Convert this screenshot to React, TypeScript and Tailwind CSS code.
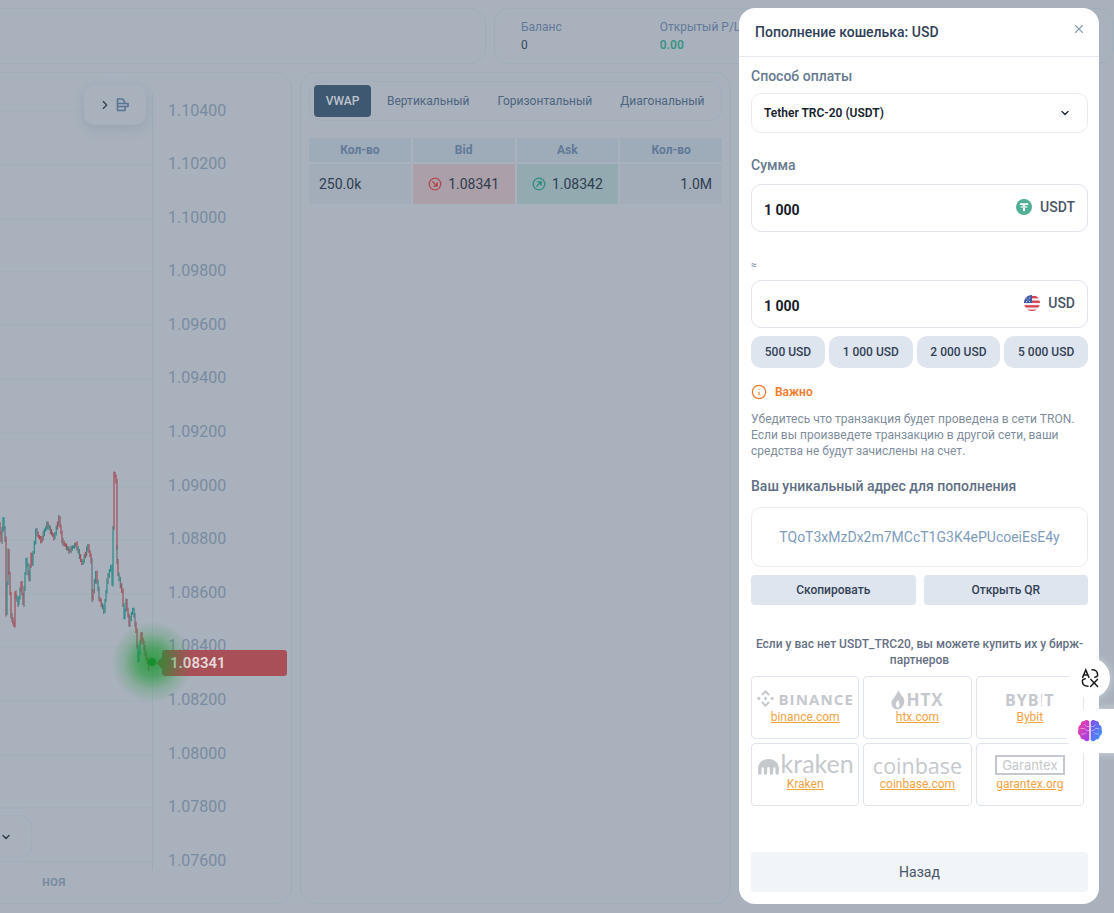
import React from 'react';
import { ChevronDown, ChevronRight, Info, X } from 'lucide-react';

const prices = ['1.10400', '1.10200', '1.10000', '1.09800', '1.09600', '1.09400', '1.09200', '1.09000', '1.08800', '1.08600', '1.08400', '1.08200', '1.08000', '1.07800', '1.07600'];
const gridLines = [110, 164, 218, 271, 324, 378, 432, 486, 539, 593, 646, 700, 754, 807, 861];
const amounts = ['500 USD', '1 000 USD', '2 000 USD', '5 000 USD'];

// price line, read off the reference (x, y in page pixels)
const pricePath: [number, number][] = [
    [-4, 520], [0, 523], [2, 540], [4, 518], [6, 538], [7, 613], [9, 550], [12, 615], [15, 625], [16, 592], [19, 603], [22, 582], [24, 603], [27, 558], [30, 578], [32, 553], [33, 563], [37, 530], [42, 540], [48, 523], [55, 537], [60, 517], [63, 540], [70, 550], [77, 543], [83, 563], [89, 545], [92, 560], [93, 598], [97, 572], [100, 597], [105, 610], [108, 580], [112, 565], [113, 583], [115, 472], [117, 480], [117, 547], [119, 573], [123, 590], [125, 617], [127, 600], [130, 623], [134, 608], [137, 630], [139, 660], [142, 633], [145, 647], [150, 667],
];

const candles = (() => {
    const out: { x: number; y1: number; y2: number; c: string }[] = [];
    for (let i = 0; i < pricePath.length - 1; i++) {
        const [x1, y1] = pricePath[i];
        const [x2, y2] = pricePath[i + 1];
        const n = Math.max(1, Math.round((x2 - x1) / 1.2));
        for (let k = 0; k < n; k++) {
            const a = y1 + ((y2 - y1) * k) / n;
            const b = y1 + ((y2 - y1) * (k + 1)) / n;
            const seed = (i * 7 + k * 13) % 5;
            const colour = seed === 4 ? '#64747c' : y2 > y1 ? (seed === 1 ? '#2b8a88' : '#a34f5a') : (seed === 1 ? '#a34f5a' : '#2b8a88');
            out.push({ x: x1 + ((x2 - x1) * k) / n, y1: Math.min(a, b) - 1 - seed * 0.5, y2: Math.max(a, b) + 1 + seed * 0.5, c: colour });
        }
    }
    return out;
})();

const ChartSvg = () => (
    <svg viewBox="-16 92 169 777" className="w-[169px] h-[777px] block">
        {gridLines.map((y) => (
            <line key={y} x1="-16" x2="153" y1={y} y2={y} stroke="#a3adb9" strokeWidth="1" />
        ))}
        {candles.map((c, i) => (
            <line key={i} x1={c.x} x2={c.x} y1={c.y1} y2={c.y2} stroke={c.c} strokeWidth="1.2" />
        ))}
    </svg>
);

const RoundArrow = ({ colour, up }: { colour: string; up?: boolean }) => (
    <svg viewBox="0 0 14 14" className="w-[14px] h-[14px] shrink-0" fill="none" stroke={colour} strokeWidth="1.3">
        <circle cx="7" cy="7" r="5.8" />
        {up ? (
            <path d="M4.800 9.200 9 5M5.800 4.800h3.400v3.400" strokeLinecap="round" strokeLinejoin="round" fill={colour} />
        ) : (
            <path d="M4.800 4.800 9 9M9.200 5.800v3.400H5.800" strokeLinecap="round" strokeLinejoin="round" fill={colour} />
        )}
    </svg>
);

const TetherIcon = () => (
    <svg viewBox="0 0 16 16" className="w-4 h-4 shrink-0">
        <circle cx="8" cy="8" r="8" fill="#50af95" />
        <path d="M3.800 4.200h8.400v1.900H9v1c1.500.1 2.800.4 2.800.8s-1.300.7-2.800.8v3.300H7V8.700c-1.500-.1-2.800-.4-2.800-.8s1.300-.7 2.800-.8v-1H3.800z" fill="#fff" />
        <path d="M4.600 7.700c1 .4 5.800.4 6.800 0" stroke="#50af95" strokeWidth=".5" fill="none" />
    </svg>
);

const FlagIcon = () => (
    <svg viewBox="0 0 16 16" className="w-4 h-4 shrink-0">
        <clipPath id="flag-clip"><circle cx="8" cy="8" r="8" /></clipPath>
        <g clipPath="url(#flag-clip)">
            <rect width="16" height="16" fill="#f0f0f0" />
            <rect y="1" width="16" height="2.300" fill="#d8404f" />
            <rect y="5.600" width="16" height="2.300" fill="#d8404f" />
            <rect y="10.200" width="16" height="2.300" fill="#d8404f" />
            <rect y="14.600" width="16" height="2" fill="#d8404f" />
            <rect width="8" height="8" fill="#3f5aa8" />
            <path d="M2 3h1M5 3h1M3.500 5h1M2 6.500h1M5 6.500h1" stroke="#fff" strokeWidth=".8" />
        </g>
    </svg>
);

const TranslateIcon = () => (
    <svg viewBox="0 0 20 20" className="w-5 h-5" fill="none" stroke="#1a1a1a" strokeWidth="1.5" strokeLinecap="round">
        <path d="M2.600 9.400 5.800 2l3.100 7.400M3.800 7h4" />
        <path d="M12 1.800c3.400 0 5.800 1.500 5.600 5.200M14.800 9.200c1.500-.2 2.400-.7 2.800-1.600" />
        <path d="M8 18.200c-3.400 0-5.800-1.500-5.600-5.200M5.200 10.800c-1.500.2-2.400.7-2.800 1.600" />
        <path d="M10.800 11.400 17.600 18.400M17.400 11.400 10.600 18.400" />
    </svg>
);

const BrainIcon = () => (
    <svg viewBox="0 0 26 24" className="w-[26px] h-6">
        <defs>
            <linearGradient id="brain-left" x1="0" y1="0" x2="1" y2="1">
                <stop offset="0" stopColor="#f8409a" />
                <stop offset="1" stopColor="#9a3ff0" />
            </linearGradient>
            <linearGradient id="brain-right" x1="0" y1="0" x2="1" y2="1">
                <stop offset="0" stopColor="#8a4bf0" />
                <stop offset="1" stopColor="#2f9cf8" />
            </linearGradient>
        </defs>
        <path d="M12.300 2.600C11.400.8 8.600.4 7.300 2 5 1.800 3.400 3.600 3.900 5.600 1.800 6.600.7 8.800 1.500 11 .3 13 1 15.800 3.200 16.800c-.1 2.400 1.800 4 3.900 3.700 1.200 2.200 4.100 2.200 5.200.6z" fill="url(#brain-left)" />
        <path d="M13.700 2.600c.9-1.800 3.700-2.200 5-.6 2.300-.2 3.900 1.600 3.400 3.600 2.100 1 3.200 3.200 2.400 5.400 1.200 2 .5 4.800-1.700 5.800.1 2.400-1.800 4-3.900 3.700-1.200 2.200-4.100 2.200-5.200.6z" fill="url(#brain-right)" />
        <path d="M3.500 9.500h4l2 2h2.500M4 15h3.500l1.500-1.500M7.500 5.500l2 2h2.500M22.500 9.500h-4l-2 2H14M22 15h-3.500L17 13.500M18.500 5.500l-2 2H14" fill="none" stroke="#fff" strokeWidth=".7" opacity=".6" />
    </svg>
);

const Field = ({ right }: { right: React.ReactNode }) => (
    <div className="h-12 rounded-[10px] border border-[#e0e5ec] pl-3 pr-3 flex justify-between">
        <span className="text-sm font-bold text-[#17202c] mt-4 leading-[18px]">1 000</span>
        <span className="flex items-center gap-2 h-[44px] text-sm font-medium text-[#4a5568]">{right}</span>
    </div>
);

const Exchange = ({ logo, label }: { logo: React.ReactNode; label: string }) => (
    <div className="h-[63px] rounded border border-[#dfe4ec] flex flex-col items-center pt-2">
        <div className="h-[25px] w-full flex items-center justify-center text-[#c5c8cc] whitespace-nowrap">{logo}</div>
        <a className="text-xs leading-[14px] underline text-[#f2a23f]">{label}</a>
    </div>
);

const App = () => {
    return (
        <div className="h-screen w-full relative overflow-hidden bg-[#a8b1bc] text-[#2f3d50] font-['Roboto',sans-serif]">
            <div className="-ml-6 flex flex-col gap-2 pt-2">
                {/* Top cards */}
                <div className="flex gap-2 h-14">
                    <div className="w-[510px] rounded-2xl border border-[#9fadbb]" />
                    <div className="w-[620px] rounded-2xl border border-[#9fadbb] pl-[26px] pt-[9px] flex gap-[98px] text-xs leading-[18px]">
                        <div>
                            <div className="text-[#64799a]">Баланс</div>
                            <div className="text-[#3a4a5e]">0</div>
                        </div>
                        <div>
                            <div className="text-[#64799a] whitespace-nowrap">Открытый P/L</div>
                            <div className="font-semibold text-[#3a9485]">0.00</div>
                        </div>
                    </div>
                </div>

                <div className="flex gap-2 h-[832px]">
                    {/* Chart */}
                    <div className="w-[316px] relative rounded-2xl border border-[#9fadbb]">
                        <div className="flex pt-5">
                            <div className="w-[177px] h-[777px] border-r border-[#9dabb9] pl-2 -ml-px overflow-hidden">
                                <ChartSvg />
                            </div>
                            <div className="h-[778px] pt-[7.5px] pl-[15px] flex flex-col justify-between text-base leading-5 text-[#7a8ba1]">
                                {prices.map((p) => (
                                    <div key={p}>{p}</div>
                                ))}
                            </div>
                        </div>
                        <div className="pl-[65px] text-sm font-medium text-[#7a8ba1]">ноя</div>

                        <div className="absolute left-[107px] top-[12px] w-[62px] h-10 rounded-[10px] border border-[#a3b0bd] bg-[#a8b1bc] shadow-[0_4px_12px_rgba(90,105,125,0.18)] flex items-center justify-center gap-1">
                            <ChevronRight size={14} className="text-[#2f3d50] -ml-[3px]" />
                            <svg viewBox="0 0 14 14" className="w-[14px] h-[14px]" fill="none" stroke="#587593" strokeWidth="1.6">
                                <path d="M1.500 1h5l2 2.500v2H1.500zM1.500 5.500h10.500v3H1.500zM1.500 8.500h7.500v4H1.500z" strokeLinejoin="round" />
                            </svg>
                        </div>

                        <div className="absolute left-0 top-[742px] w-[55px] h-[43px] rounded-xl border border-[#a1aebc] flex items-center pl-[22px]">
                            <ChevronDown size={12} strokeWidth={3} className="text-[#2f3d50]" />
                        </div>

                        <div className="absolute left-[185px] top-[577px] w-[125px] h-[26px] rounded-[3px] bg-[#a94f57] pl-2 flex items-center text-[15px] font-semibold text-[#e4d9da]">
                            1.08341
                            <div className="absolute -left-1 top-[9px] w-2 h-2 rotate-45 bg-[#a94f57]" />
                        </div>
                        <div className="absolute left-[135px] top-[549px] w-[80px] h-[80px] rounded-full bg-[radial-gradient(circle,rgba(24,150,45,0.8)_0%,rgba(24,150,45,0.6)_25%,rgba(24,150,45,0.2)_50%,rgba(24,150,45,0)_72%)]" />
                        <div className="absolute left-[171px] top-[585px] w-2 h-2 rounded-full bg-[#15902d]" />
                    </div>

                    {/* Quotes */}
                    <div className="w-[431px] rounded-2xl border border-[#9fadbb] p-2">
                        <div className="h-10 rounded-xl border border-[#a0aebc] flex items-center pl-1 text-xs text-[#4f6580]">
                            <div className="w-[57px] h-8 shrink-0 rounded bg-[#3f5872] text-[#bcc4cd] font-medium text-xs flex items-center justify-center">VWAP</div>
                            <div className="ml-4">Вертикальный</div>
                            <div className="ml-7">Горизонтальный</div>
                            <div className="ml-7">Диагональный</div>
                        </div>
                        <div className="mt-[17px] grid grid-cols-4 gap-0.5 w-[413px]">
                            {['Кол-во', 'Bid', 'Ask', 'Кол-во'].map((h, i) => (
                                <div key={i} className="h-6 bg-[#9eabb9] flex items-center justify-center text-xs font-bold text-[#617a98]">{h}</div>
                            ))}
                            <div className="h-10 bg-[#a2adb9] flex items-center pl-2.5 text-sm">250.0k</div>
                            <div className="h-10 bg-[#ab9fa9] flex items-center justify-center gap-1.5 text-sm"><RoundArrow colour="#b5474f" />1.08341</div>
                            <div className="h-10 bg-[#93aab0] flex items-center justify-center gap-1.5 text-sm"><RoundArrow colour="#2f8d82" up />1.08342</div>
                            <div className="h-10 bg-[#a2adb9] flex items-center justify-end pr-2.5 text-sm">1.0M</div>
                        </div>
                    </div>
                </div>
            </div>

            {/* Deposit drawer */}
            <div className="absolute left-[739px] top-2 w-[360px] h-[896px] rounded-2xl bg-white flex flex-col">
                <div className="h-[49px] shrink-0 border-b border-[#e6eaf0] pl-4 pr-[13px] flex items-center justify-between">
                    <span className="text-sm font-medium text-[#2f4058]">Пополнение кошелька: USD</span>
                    <X size={14} className="text-[#8aa0b8] -mt-1.5" />
                </div>
                <div className="pl-3 pr-[11px] flex-1 flex flex-col">
                    <div className="mt-[9px] text-sm leading-5 font-medium text-[#667a91]">Способ оплаты</div>
                    <div className="mt-[7px] h-10 rounded-[10px] border border-[#e8ecf1] pl-3 pr-4 flex items-center justify-between text-xs font-semibold text-[#17202c]">
                        Tether TRC-20 (USDT)
                        <ChevronDown size={12} strokeWidth={2.5} />
                    </div>
                    <div className="mt-[22px] text-sm leading-5 font-medium text-[#667a91]">Сумма</div>
                    <div className="mt-[9px]">
                        <Field right={<><TetherIcon />USDT</>} />
                    </div>
                    <div className="mt-[26px] h-[22px] text-[10px] leading-[14px] text-[#667a91]">≈</div>
                    <Field right={<><FlagIcon />USD</>} />
                    <div className="mt-2 flex gap-1">
                        {amounts.map((a) => (
                            <div key={a} className="flex-auto h-8 rounded-[10px] bg-[#dfe5ef] flex items-center justify-center px-[13px] text-xs font-medium text-[#334155] whitespace-nowrap">{a}</div>
                        ))}
                    </div>
                    <div className="mt-4 flex items-center gap-2 text-xs leading-4 font-semibold text-[#ef7b2d]">
                        <Info size={16} strokeWidth={1.8} />
                        Важно
                    </div>
                    <p className="mt-[11px] text-xs leading-4 text-[#808d9d]">
                        Убедитесь что транзакция будет проведена в сети TRON.<br />
                        Если вы произведете транзакцию в другой сети, ваши<br />
                        средства не будут зачислены на счет.
                    </p>
                    <div className="mt-[17px] text-sm leading-5 font-medium text-[#5f6f85]">Ваш уникальный адрес для пополнения</div>
                    <div className="mt-[11px] h-[60px] rounded-[10px] border border-[#e8ecf1] flex items-center justify-center text-sm text-[#7d9cbc]">TQoT3xMzDx2m7MCcT1G3K4ePUcoeiEsE4y</div>
                    <div className="mt-2 flex gap-2">
                        <div className="flex-1 h-[30px] rounded bg-[#dfe5ef] flex items-center justify-center text-xs font-medium text-[#334155]">Скопировать</div>
                        <div className="flex-1 h-[30px] rounded bg-[#dfe5ef] flex items-center justify-center text-xs font-medium text-[#334155]">Открыть QR</div>
                    </div>
                    <p className="mt-[31px] text-center text-xs leading-4 font-medium text-[#667085]">
                        Если у вас нет USDT_TRC20, вы можете купить их у бирж-<br />партнеров
                    </p>
                    <div className="mt-2 grid grid-cols-3 gap-1 w-[333px]">
                        <Exchange
                            label="binance.com"
                            logo={
                                <span className="flex items-center gap-[3px] mt-[2px]">
                                    <svg viewBox="0 0 20 20" className="w-[19px] h-[19px]" fill="#c5c8cc">
                                        <path d="M10 1 14.500 5.500 13 7 10 4 7 7 5.500 5.500zM10 19 5.500 14.500 7 13 10 16 13 13 14.500 14.500zM1 10l2-2 2 2-2 2zM15 10l2-2 2 2-2 2zM10 8l2 2-2 2-2-2z" />
                                    </svg>
                                    <span className="font-['Open_Sans',sans-serif] text-[15px] leading-5 font-bold tracking-[1.1px]">BINANCE</span>
                                </span>
                            }
                        />
                        <Exchange
                            label="htx.com"
                            logo={
                                <span className="flex items-center gap-[1px] mt-1">
                                    <svg viewBox="0 0 14 20" className="w-[14px] h-5" fill="#c5c8cc">
                                        <path d="M7.500 0c.5 3 4 5.500 5.500 9 1.300 4-1 9.500-6 10.500-4 .3-7-3-6.500-7 .4-3 3-4.500 4-7C5.500 4 6.800 2 7.500 0zM7 10c-1.500 2-2.500 3.500-2 5.500.3 1.500 1.500 2.500 2.500 2 1.500-1 1.500-4-.5-7.500z" />
                                    </svg>
                                    <span className="font-['Open_Sans',sans-serif] text-[17px] leading-5 font-bold tracking-[1px]">HTX</span>
                                </span>
                            }
                        />
                        <Exchange
                            label="Bybit"
                            logo={<span className="font-['Open_Sans',sans-serif] text-[16px] leading-5 font-bold tracking-[1px] mt-1">BYB<span className="font-light">!</span>T</span>}
                        />
                        <Exchange
                            label="Kraken"
                            logo={
                                <span className="flex items-center gap-[1px]">
                                    <svg viewBox="0 0 24 18" className="w-[23px] h-[17px] mt-1" fill="#c5c8cc">
                                        <path d="M12 1C5.500 1 1 5.500 1 11v5a1.800 1.800 0 0 0 3.600 0v-5a1.200 1.200 0 0 1 2.400 0v5a1.800 1.800 0 0 0 3.600 0v-5a1.300 1.300 0 0 1 2.800 0v5a1.800 1.800 0 0 0 3.600 0v-5a1.200 1.200 0 0 1 2.400 0v5a1.800 1.800 0 0 0 3.600 0v-5c0-5.500-4.500-10-11-10z" />
                                    </svg>
                                    <span className="font-['Lato',sans-serif] text-[25px] leading-[22px] font-normal -mt-1">kraken</span>
                                </span>
                            }
                        />
                        <Exchange
                            label="coinbase.com"
                            logo={<span className="font-['Open_Sans',sans-serif] text-[21.5px] leading-5 font-medium mt-[3px]">coinbase</span>}
                        />
                        <Exchange
                            label="garantex.org"
                            logo={
                                <span className="w-[70px] h-5 mt-[1px] border-2 border-[#c5c8cc] flex items-center justify-center font-['Inter',sans-serif] text-[13px] leading-none">Garantex</span>
                            }
                        />
                    </div>
                    <div className="mt-[46px] h-10 rounded bg-[#f1f4f8] flex items-center justify-center text-sm text-[#475569]">Назад</div>
                </div>
            </div>

            {/* Floating helpers */}
            <div className="absolute left-[1070px] top-[658px] w-10 h-10 rounded-full bg-white shadow-[0_0_10px_rgba(255,255,255,0.5)] flex items-center justify-center">
                <TranslateIcon />
            </div>
            <div className="absolute left-[1065px] top-[709px] w-[60px] h-[44px] rounded-l-[22px] bg-white flex items-center pl-[12px] shadow-[0_0_10px_rgba(255,255,255,0.5)]">
                <BrainIcon />
            </div>
        </div>
    );
};

export default App;
